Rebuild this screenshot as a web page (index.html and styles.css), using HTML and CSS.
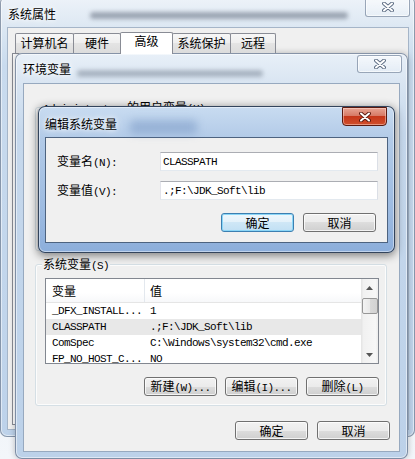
FILE: index.html
```html
<!DOCTYPE html>
<html lang="zh-CN">
<head>
<meta charset="utf-8">
<title>编辑系统变量</title>
<link rel="stylesheet" href="styles.css">
</head>
<body>
<div class="win outer">
  <div class="win-title outer-title">
    <span class="ttext">系统属性</span>
    <span class="blur ob1"></span>
  </div>
  <div class="close close-inact close-outer">
    <svg width="12" height="10" viewBox="0 0 12 10"><path d="M2 1.5L10 8.5M10 1.5L2 8.5" stroke="#5b6b82" stroke-width="3.8" stroke-linecap="round"/><path d="M2 1.5L10 8.5M10 1.5L2 8.5" stroke="#fff" stroke-width="2" stroke-linecap="round"/></svg>
  </div>
  <div class="client outer-client">
    <div class="tabs">
      <div class="tab t1">计算机名</div>
      <div class="tab t2">硬件</div>
      <div class="tab sel t3">高级</div>
      <div class="tab t4">系统保护</div>
      <div class="tab t5">远程</div>
    </div>
    <div class="tabpanel"></div>
  </div>
</div>

<div class="win env">
  <div class="win-title env-title">
    <span class="ttext">环境变量</span>
    <span class="blur eb1"></span>
  </div>
  <div class="close close-inact close-env">
    <svg width="12" height="10" viewBox="0 0 12 10"><path d="M2 1.5L10 8.5M10 1.5L2 8.5" stroke="#5b6b82" stroke-width="3.8" stroke-linecap="round"/><path d="M2 1.5L10 8.5M10 1.5L2 8.5" stroke="#fff" stroke-width="2" stroke-linecap="round"/></svg>
  </div>
  <div class="client env-client">
    <div class="group ugroup">
      <div class="glabel"><span class="m">Administrator </span>的用户变量<span class="m">(U)</span></div>
    </div>
    <div class="group sgroup">
      <div class="glabel">系统变量<span class="m">(S)</span></div>
      <div class="listbox">
        <div class="lv">
          <div class="lv-head"><div class="c1">变量</div><div class="c2">值</div></div>
          <div class="lv-row"><div class="c1 m">_DFX_INSTALL...</div><div class="c2 m">1</div></div>
          <div class="lv-row hl"><div class="c1 m">CLASSPATH</div><div class="c2 m">.;F:\JDK_Soft\lib</div></div>
          <div class="lv-row"><div class="c1 m">ComSpec</div><div class="c2 m">C:\Windows\system32\cmd.exe</div></div>
          <div class="lv-row"><div class="c1 m">FP_NO_HOST_C...</div><div class="c2 m">NO</div></div>
        </div>
        <div class="sb">
          <div class="sb-btn"><svg width="7" height="4" viewBox="0 0 7 4"><polygon points="0,4 3.5,0 7,4" fill="#555"/></svg></div>
          <div class="sb-thumb"></div>
          <div class="sb-fill"></div>
          <div class="sb-btn"><svg width="7" height="4" viewBox="0 0 7 4"><polygon points="0,0 7,0 3.5,4" fill="#555"/></svg></div>
        </div>
      </div>
      <div class="btnrow grpbtns">
        <button class="btn">新建<span class="m">(W)...</span></button>
        <button class="btn">编辑<span class="m">(I)...</span></button>
        <button class="btn">删除<span class="m">(L)</span></button>
      </div>
    </div>
    <div class="btnrow envbtns">
      <button class="btn">确定</button>
      <button class="btn">取消</button>
    </div>
  </div>
</div>

<div class="win edit">
  <div class="win-title edit-title">
    <span class="ttext">编辑系统变量</span>
    <span class="blur edb"></span>
  </div>
  <div class="close close-red">
    <svg width="12" height="10" viewBox="0 0 12 10"><path d="M2 1.5L10 8.5M10 1.5L2 8.5" stroke="#5a1a10" stroke-width="3.8" stroke-linecap="round"/><path d="M2 1.5L10 8.5M10 1.5L2 8.5" stroke="#fff" stroke-width="2" stroke-linecap="round"/></svg>
  </div>
  <div class="client edit-client">
    <div class="form">
      <label class="flabel">变量名<span class="m">(N):</span></label>
      <input class="input" type="text" value="CLASSPATH">
      <label class="flabel">变量值<span class="m">(V):</span></label>
      <input class="input" type="text" value=".;F:\JDK_Soft\lib">
    </div>
    <div class="btnrow editbtns">
      <button class="btn def">确定</button>
      <button class="btn">取消</button>
    </div>
  </div>
</div>
</body>
</html>
```

FILE: styles.css
```css
* { box-sizing: border-box; }
html, body { margin: 0; padding: 0; }
body {
  position: relative;
  width: 415px;
  height: 459px;
  overflow: hidden;
  background: linear-gradient(#dfe8f2, #f3f6fa);
  font-family: "Noto Sans CJK SC", "Noto Sans", sans-serif;
  font-size: 12px;
  color: #000;
}
.m {
  font-family: "Liberation Mono", "Noto Sans CJK SC", monospace;
  font-size: 11px;
  letter-spacing: -0.6px;
}

/* windows */
.win {
  position: absolute;
  display: flex;
  flex-direction: column;
  border-radius: 7px;
}
.win-title {
  flex: none;
  display: flex;
  align-items: flex-start;
  line-height: 16px;
  white-space: nowrap;
}
.ttext {
  position: relative;
  z-index: 1;
  text-shadow: 0 0 5px #fff, 0 0 9px rgba(255,255,255,.9);
}
.blur {
  display: block;
  border-radius: 4px;
  filter: blur(2px);
}
.client {
  flex: 1;
  min-height: 0;
  display: flex;
  flex-direction: column;
  background: #f0f0f0;
  border: 1px solid;
}
.close {
  position: absolute;
  display: flex;
  align-items: center;
  justify-content: center;
}
.close svg { display: block; }
.close-inact {
  border: 1px solid rgba(80,100,130,.55);
  border-radius: 3px;
  background: linear-gradient(rgba(255,255,255,.55), rgba(255,255,255,.15));
  box-shadow: inset 0 0 0 1px rgba(255,255,255,.6);
}

/* outer: 系统属性 */
.outer {
  left: 0;
  top: -4px;
  width: 415px;
  height: 441px;
  padding: 0 6px 7px 7px;
  background: linear-gradient(180deg, #eef3f9 0, #dde8f3 30px, #c9dbee 70px, #bdd2ea 100%);
  box-shadow: inset 0 0 0 1px rgba(60,80,110,.55), inset 0 0 0 2px rgba(255,255,255,.5);
}
.outer-title { height: 31px; padding: 10px 0 0 1px; }
.ob1 {
  width: 258px;
  height: 7px;
  margin: 6px 0 0 34px;
  background: rgba(50,60,80,.4);
}
.close-outer { right: 5px; top: 1px; width: 45px; height: 20px; }
.outer-client { border-color: #a5b5c8; padding: 5px 4px 4px 4px; }

.tabs {
  display: flex;
  align-items: flex-end;
  height: 20px;
  margin-left: 3px;
  position: relative;
  z-index: 1;
}
.tab {
  height: 20px;
  border: 1px solid #898c95;
  border-bottom: 0;
  margin-right: -1px;
  border-radius: 2px 2px 0 0;
  background: linear-gradient(#f7f7f7, #eeeeee 50%, #e4e4e4 50%, #dcdcdc);
  line-height: 18px;
  text-align: center;
}
.tab.sel {
  height: 22px;
  margin-bottom: -1px;
  background: #fff;
  line-height: 16px;
  position: relative;
  z-index: 2;
}
.t1 { width: 59px; }
.t2 { width: 48px; }
.t3 { width: 53px; }
.t4 { width: 59px; }
.t5 { width: 46px; }
.tabpanel {
  flex: 1;
  border: 1px solid #898c95;
  background: #fff;
  margin-right: 2px;
}

/* env: 环境变量 */
.env {
  left: 15px;
  top: 53px;
  width: 393px;
  height: 406px;
  padding: 0 8px 7px 8px;
  background: linear-gradient(180deg, #e8f0f8 0, #d9e5f2 30px, #c6d8ec 80px, #bcd1e9 100%);
  box-shadow: inset 0 0 0 1px rgba(60,80,110,.6), inset 0 0 0 2px rgba(255,255,255,.5), 0 0 6px rgba(0,0,0,.25);
}
.env-title { height: 30px; padding-top: 8px; }
.eb1 {
  width: 186px;
  height: 7px;
  margin: 9px 0 0 6px;
  background: rgba(60,70,90,.32);
}
.close-env { right: 6px; top: 2px; width: 45px; height: 18px; }
.env-client { border-color: #97a9bf; }

.group {
  display: flex;
  flex-direction: column;
  border: 1px solid #d5dfe5;
  border-radius: 3px;
  box-shadow: inset 0 0 0 1px rgba(255,255,255,.8);
}
.glabel {
  align-self: flex-start;
  height: 14px;
  line-height: 14px;
  margin: -8px 0 0 6px;
  padding: 0 1px;
  background: #f0f0f0;
  white-space: nowrap;
}
.ugroup { margin: 23px 12px 0 11px; height: 144px; }
.sgroup { margin: 13px 12px 0 11px; padding-bottom: 9px; }

.listbox {
  display: flex;
  width: 334px;
  height: 86px;
  margin: 7px 0 0 9px;
  border: 1px solid #828790;
  background: #fff;
  overflow: hidden;
}
.lv { flex: 1; min-width: 0; overflow: hidden; }
.lv-head {
  display: flex;
  height: 24px;
  border-bottom: 1px solid #e5e5e5;
  background: linear-gradient(#fff, #fff 60%, #f7f8fa);
}
.c1 { width: 99px; flex: none; padding-left: 6px; white-space: nowrap; overflow: hidden; }
.c2 { flex: 1; padding-left: 5px; white-space: nowrap; overflow: hidden; }
.lv-head .c1 { border-right: 1px solid #e3e8ee; line-height: 23px; }
.lv-head .c2 { line-height: 23px; }
.lv-row { display: flex; height: 16px; line-height: 16px; }
.lv-row.hl { background: #e8e8e8; }

.sb {
  width: 17px;
  flex: none;
  display: flex;
  flex-direction: column;
  background: linear-gradient(90deg, #e3e3e3, #f1f1f1 15%, #f7f7f7 85%, #ececec);
}
.sb-btn { height: 17px; display: flex; align-items: center; justify-content: center; }
.sb-btn svg { display: block; }
.sb-thumb {
  height: 16px;
  margin: 2px 0 0 1px;
  border: 1px solid #979797;
  border-radius: 2px;
  background: linear-gradient(90deg, #f3f3f3, #e8e8e8 50%, #d9d9d9 50%, #d2d2d2);
}
.sb-fill { flex: 1; }

/* buttons */
.btnrow { display: flex; justify-content: flex-end; }
.btn {
  width: 73px;
  height: 19px;
  padding: 0;
  font-family: "Noto Sans CJK SC", sans-serif;
  font-size: 12px;
  line-height: 16px;
  color: #000;
  white-space: nowrap;
  border: 1px solid #707070;
  border-radius: 3px;
  background: linear-gradient(#f2f2f2, #ebebeb 50%, #dddddd 50%, #cfcfcf);
  box-shadow: inset 0 0 0 1px rgba(255,255,255,.75);
}
.btn .m { font-size: 11px; }
.grpbtns { margin-top: 13px; padding-right: 7px; gap: 8px; }
.envbtns { margin-top: 15px; padding-right: 9px; gap: 9px; }
.btn.def {
  border-color: #3c7fb1;
  box-shadow: inset 0 0 0 1px #8bd6f7;
  background: linear-gradient(#eef7fc, #e3f1fa 50%, #cfe7f6 50%, #c1e0f4);
}

/* edit: 编辑系统变量 */
.edit {
  left: 38px;
  top: 106px;
  width: 357px;
  height: 147px;
  padding: 0 7px 10px 7px;
  background: linear-gradient(180deg, #c9dcf1 0, #b3cbe8 31px, #9dbbe1 70%, #8caedb 100%);
  box-shadow: inset 0 0 0 1px #33445c, inset 0 0 0 2px rgba(255,255,255,.45), 0 2px 9px 1px rgba(0,0,0,.45);
}
.edit-title { height: 31px; padding-top: 10px; }
.edb {
  width: 67px;
  height: 14px;
  margin: 4px 0 0 13px;
  background: rgba(70,110,170,.3);
  filter: blur(4px);
}
.close-red {
  right: 8px;
  top: 1px;
  width: 45px;
  height: 19px;
  border: 1px solid #5a1a10;
  border-radius: 0 0 4px 4px;
  background: linear-gradient(#e8a493, #d77a66 45%, #c6371a 50%, #d04f2c 100%);
  box-shadow: inset 0 0 0 1px rgba(255,220,210,.5);
}
.edit-client { border-color: #4d6380; }
.form {
  display: grid;
  grid-template-columns: 103px 218px;
  row-gap: 10px;
  align-items: center;
  padding: 14px 0 0 11px;
}
.flabel { white-space: nowrap; line-height: 16px; }
.input {
  height: 19px;
  margin: 0;
  padding: 0 2px;
  border: 1px solid;
  border-color: #abadb3 #dbdfe6 #e3e9ef #e2e3ea;
  background: #fff;
  color: #000;
  font-family: "Liberation Mono", monospace;
  font-size: 11px;
  letter-spacing: -0.6px;
  outline: none;
}
.editbtns { margin-top: 13px; padding-right: 11px; gap: 9px; }
```
